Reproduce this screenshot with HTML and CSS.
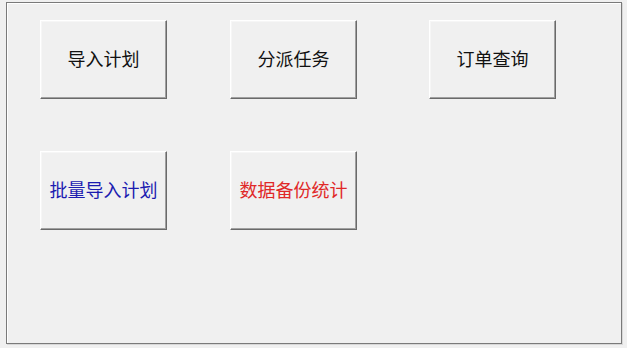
FILE: index.html
```html
<!DOCTYPE html>
<html lang="zh-CN">
<head>
<meta charset="utf-8">
<title>功能菜单</title>
<link rel="stylesheet" href="styles.css">
</head>
<body>
<div class="frame">
  <div class="grid">
    <button class="btn">导入计划</button>
    <button class="btn">分派任务</button>
    <button class="btn">订单查询</button>
    <button class="btn blue">批量导入计划</button>
    <button class="btn red">数据备份统计</button>
  </div>
</div>
</body>
</html>
```
FILE: styles.css
```css
html, body {
  margin: 0;
  padding: 0;
  background: #f0f0f0;
  width: 627px;
  height: 348px;
  overflow: hidden;
}
body {
  padding: 2px 0 0 6px;
  box-sizing: border-box;
  font-family: "Noto Sans CJK SC", "Liberation Sans", sans-serif;
}
.frame {
  width: 616px;
  height: 342px;
  box-sizing: border-box;
  border: 1px solid #7a7a7a;
  box-shadow: inset 1px 1px 0 #ffffff, 1px 1px 0 #d8d8d8;
  background: #f0f0f0;
  padding: 17px 0 0 33px;
}
.grid {
  display: grid;
  grid-template-columns: 190px 199px 126px;
  grid-auto-rows: 79px;
  row-gap: 52px;
}
.btn {
  width: 127px;
  height: 79px;
  box-sizing: border-box;
  margin: 0;
  padding: 0 0 3px 0;
  background: #f0f0f0;
  border-style: solid;
  border-width: 1px;
  border-color: #ffffff #6a6a6a #6a6a6a #ffffff;
  box-shadow: inset -1px -1px 0 #a0a0a0, inset 1px 1px 0 #f6f6f6;
  font-family: "Noto Sans CJK SC", "Liberation Sans", sans-serif;
  font-size: 18px;
  font-weight: 400;
  color: #111111;
  line-height: 1;
  cursor: default;
}
.blue { color: #1c1cb0; }
.red { color: #e02828; }
```
